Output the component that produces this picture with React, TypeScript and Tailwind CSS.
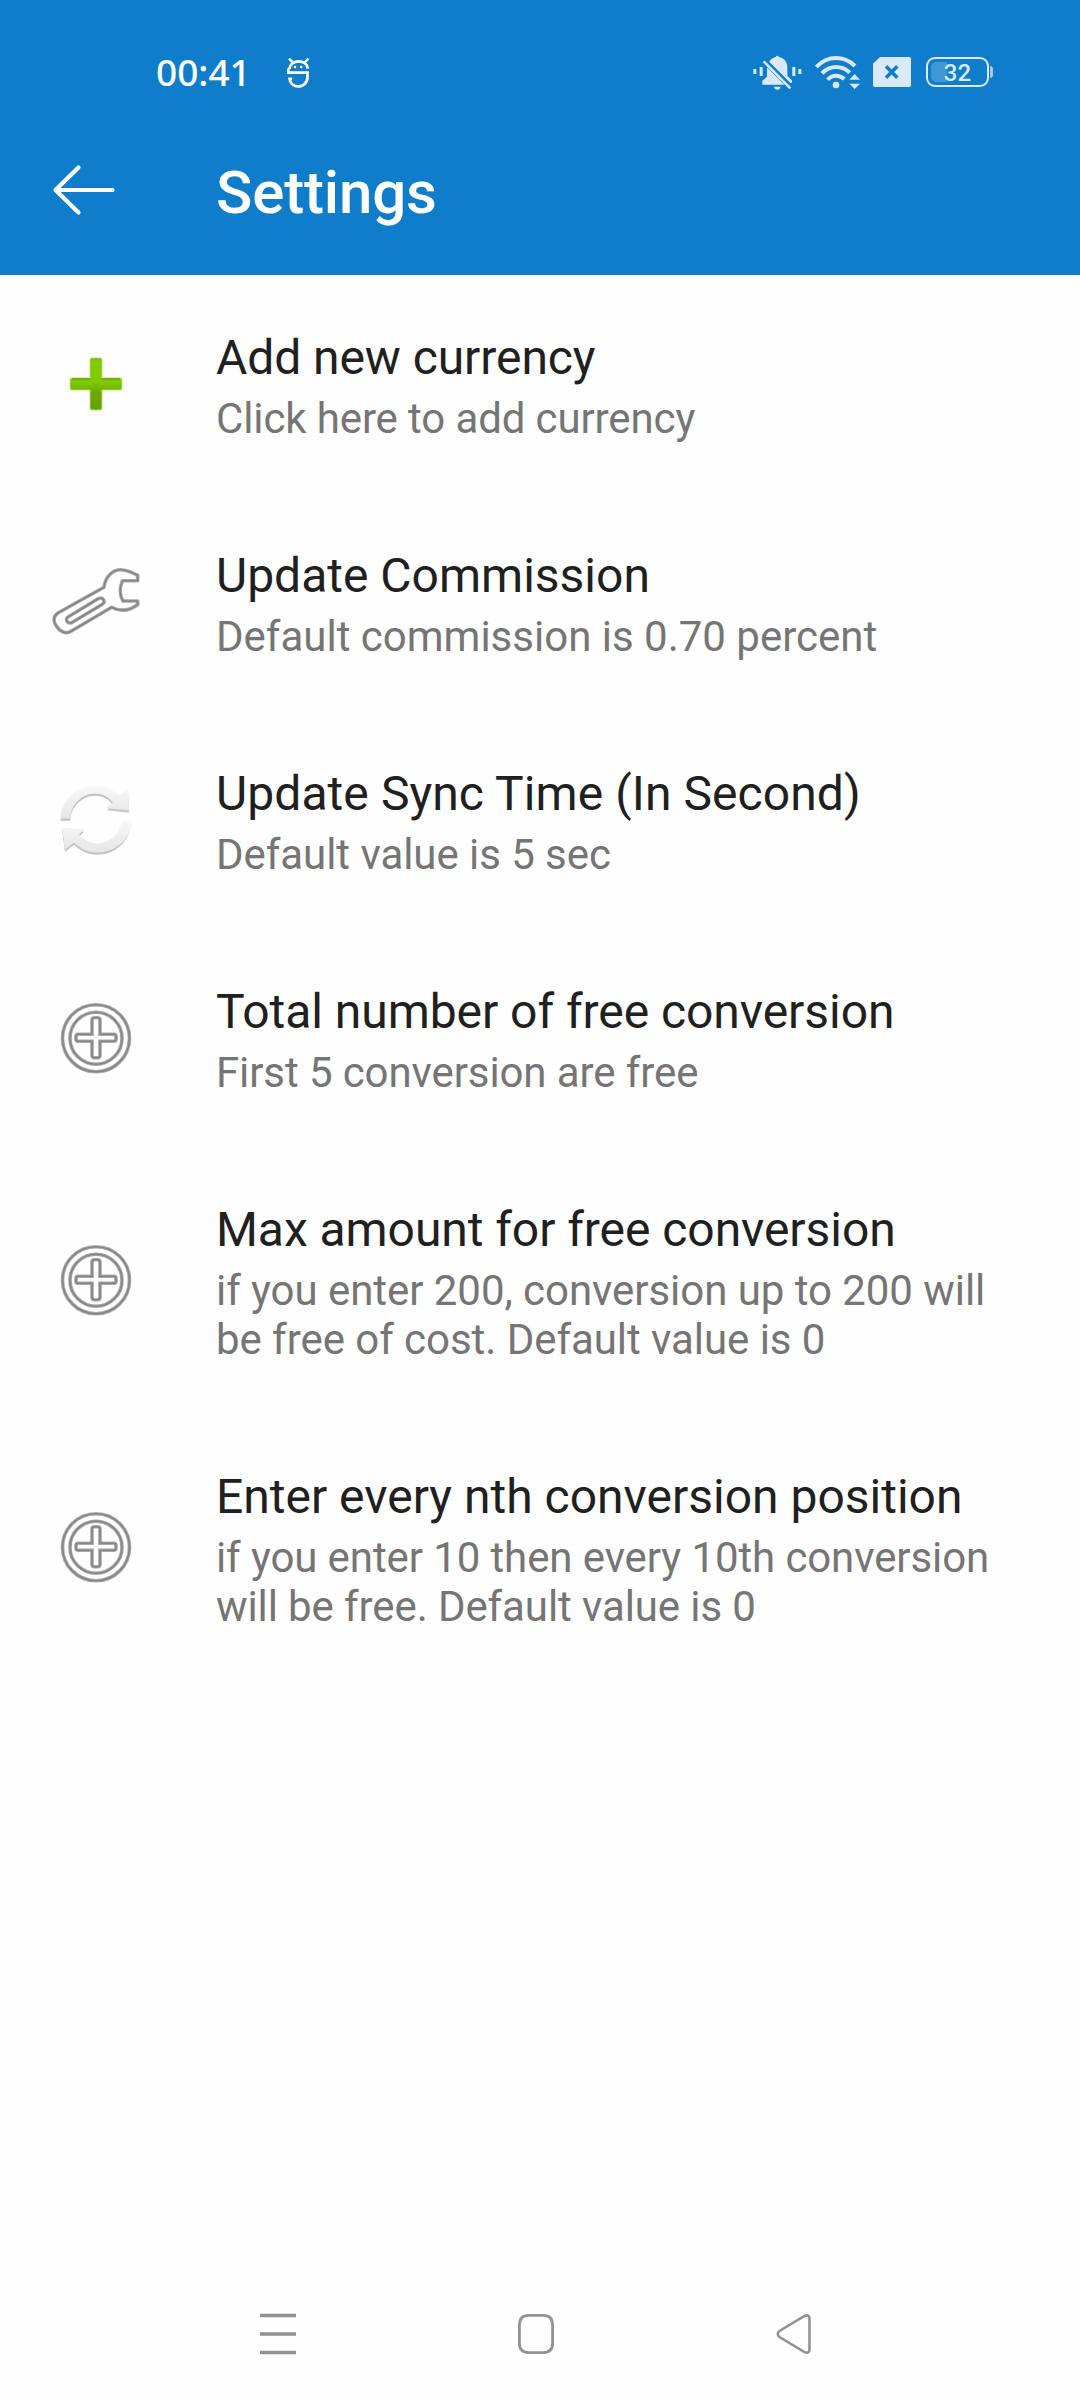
import type { ReactNode } from 'react';

function ThreadFaceIcon() {
  return (
    <svg className="w-[24px] h-[34px]" viewBox="0 0 24 34" fill="none" stroke="white" strokeWidth="2.7">
      <path d="M20.6 11.7 C20.6 7 16.5 4.300 11.600 4.300 C6.600 4.300 2.600 7.500 2.600 12" />
      <path d="M1.300 11.500 V15.600 H20.500 V19.500 C20.500 25.500 16.500 29.400 11.500 29.400 C6.500 29.400 2.600 26 2.600 21.800 H5.200" />
      <path d="M2 1.700 L5.800 5.300 M21.500 1.700 L17.700 5.300" strokeWidth="2.4" />
      <circle cx="8" cy="10" r="1.300" fill="white" stroke="none" />
      <circle cx="14.200" cy="10" r="1.300" fill="white" stroke="none" />
    </svg>
  );
}

function MutedBellIcon() {
  return (
    <svg className="w-[50px] h-[36px]" viewBox="0 0 150 108" fill="#dbe9f7">
      <rect x="4" y="45" width="9" height="15" />
      <rect x="23" y="39" width="9" height="27" />
      <rect x="121" y="39" width="9" height="27" />
      <rect x="139" y="45" width="9" height="15" />
      <path d="M50 26 C55 16 63 11 71 9 Q76 1 81 9 C96 12 106 24 106 39 V65 L120 79 V86 L113 88 Z" />
      <path d="M47 42 L97 92 H31 V80 L45 68 V42 Z" />
      <path d="M66 98 H86 Q84 107 76 107 Q68 107 66 98 Z" />
      <path d="M42 18 L120 96" stroke="#0f7dc9" strokeWidth="6" />
      <path d="M35 22 L115 103" stroke="#dbe9f7" strokeWidth="8" />
    </svg>
  );
}

function WifiIcon() {
  return (
    <svg className="w-[47px] h-[36px]" viewBox="0 0 141 108" fill="none" stroke="#dbe9f7" strokeWidth="12">
      <path d="M7 39 Q32 12 66 12 Q99 12 123 36" />
      <path d="M24 58 Q42 39 66 39 Q90 39 107 56" />
      <path d="M41 77 Q51 65 66 65 Q80 65 91 75" />
      <circle cx="66" cy="93" r="10" fill="#dbe9f7" stroke="none" />
      <path d="M106 77 L122 60 L138 77 Z M106 89 H138 L122 105 Z" fill="#dbe9f7" stroke="none" />
    </svg>
  );
}

function SimIcon() {
  return (
    <svg className="w-[38px] h-[30px]" viewBox="0 0 114 90">
      <path d="M21 0 H108 Q114 0 114 6 V84 Q114 90 108 90 H6 Q0 90 0 84 V20 Z" fill="#dbe9f7" />
      <path d="M39 28 L73 62 M73 28 L39 62" stroke="#0f7dc9" strokeWidth="10.5" />
    </svg>
  );
}

function Battery() {
  return (
    <div className="flex items-center">
      <div className="relative flex h-[30px] w-[63px] items-center justify-center rounded-[9px] border-2 border-[#dbe9f7]">
        <div className="absolute left-[3px] top-[3px] h-5 w-[16px] rounded-l-[5px] bg-[#3f97d4]" />
        <span className="relative pt-px text-[24px] font-medium leading-none text-[#dbe9f7]">32</span>
      </div>
      <div className="ml-px h-[12px] w-[3px] rounded-r-full bg-[#9fcae9]" />
    </div>
  );
}

function BackArrow() {
  return (
    <svg className="w-[64px] h-[52px]" viewBox="0 0 64 52" fill="none" stroke="white" strokeWidth="4.2" strokeLinecap="round" strokeLinejoin="round">
      <path d="M26.500 3.5 L3.500 26 L26.500 48.5 M4 26 H60.5" />
    </svg>
  );
}

function GreenPlus() {
  return (
    <svg className="w-[96px] h-[96px]" viewBox="0 0 96 96">
      <defs>
        <linearGradient id="green" x1="0" y1="0" x2="0" y2="1">
          <stop offset="0" stopColor="#6fb300" />
          <stop offset=".06" stopColor="#82cc00" />
          <stop offset=".45" stopColor="#80cb00" />
          <stop offset=".68" stopColor="#6aa900" />
          <stop offset="1" stopColor="#64a000" />
        </linearGradient>
      </defs>
      <path d="M44 22 H52 Q54 22 54 24 V42 H72 Q74 42 74 44 V52 Q74 54 72 54 H54 V72 Q54 74 52 74 H44 Q42 74 42 72 V54 H24 Q22 54 22 52 V44 Q22 42 24 42 H42 V24 Q42 22 44 22 Z" fill="url(#green)" stroke="#b9e16d" strokeWidth=".8" />
      <path d="M24 43 H42 M54 43 H72" stroke="#66a800" strokeWidth="1.4" />
    </svg>
  );
}

const WRENCH =
  'M56 33.300 C57 23 65 14.500 75 16 C80 16.500 85 19 89.700 21.300 V26.700 H74.500 C71.500 33 71.500 41 75 47 H89.700 V50.500 C81 57.500 71 57.500 63.700 53.300 L23 77.300 C17 81 11 76.500 8 71.500 C5 67 5 62 10.300 58.700 Z';
const WRENCH_SLOT = 'M20 63 L50.500 44.500 C55.500 42.500 58 48 54 50.500 L24 68.500 C19.500 70.500 16.500 65 20 63 Z';

function WrenchIcon() {
  return (
    <svg className="w-[96px] h-[96px]" viewBox="0 0 96 96" fill="none" strokeLinejoin="round">
      <g stroke="#a9a9a9" strokeWidth="3.6">
        <path d={WRENCH} />
        <path d={WRENCH_SLOT} />
      </g>
      <g stroke="#858585" strokeWidth="1.6">
        <path d={WRENCH} />
        <path d={WRENCH_SLOT} />
      </g>
    </svg>
  );
}

function SyncIcon() {
  return (
    <svg className="w-[96px] h-[96px]" viewBox="0 0 96 96">
      <defs>
        <linearGradient id="silver" x1="0" y1="0" x2="0" y2="1">
          <stop offset="0" stopColor="#f8f8f8" />
          <stop offset="1" stopColor="#e6e6e6" />
        </linearGradient>
      </defs>
      <g fill="#c4c4c4" transform="translate(0 2.8)">
        <path d="M12.500 46 C14 27 29 12.500 47 12.500 C57 12.500 65 16 71 22 L80 16 L81 38 L59 35.500 L65 30 C60 24 54 21 47 21 C34 21 23 32 22 46 Z" />
        <path d="M83 48 C82 67 67 80 49 80 C40 80 32 76 26 70 L17 77 L14 55 L36 57 L31 62 C37 68 43 71 49 71 C62 71 72 61 74 48 Z" />
      </g>
      <g fill="url(#silver)" transform="translate(0 1.4)">
        <path d="M12 45 C14 27 29 12 47 12 C57 12 65 16 71 22 L80 16 L81 37 L58 34.500 L65 29 C60 23 54 20 47 20 C34 20 23 31 22 45 Z" />
        <path d="M84 47 C83 66 67 79 49 79 C40 79 32 75 26 69 L17 76 L14 54 L36 56 L31 61 C37 67 43 70 49 70 C62 70 72 60 74 47 Z" />
      </g>
    </svg>
  );
}

const PLUS =
  'M46.500 27.800 H49.500 Q52 27.800 52 30.300 V44.300 H66 Q68 44.300 68 46.800 V48.800 Q68 51.300 66 51.300 H52 V65.300 Q52 67.800 49.500 67.800 H46.500 Q44 67.800 44 65.300 V51.300 H30 Q28 51.300 28 48.800 V46.800 Q28 44.300 30 44.300 H44 V30.300 Q44 27.800 46.500 27.800 Z';

function CirclePlusIcon() {
  return (
    <svg className="w-[96px] h-[96px]" viewBox="0 0 96 96" fill="none">
      <g stroke="#a9a9a9" strokeWidth="3.6">
        <circle cx="48" cy="48.200" r="33.500" />
        <circle cx="48" cy="48.200" r="26" />
        <path d={PLUS} />
      </g>
      <g stroke="#858585" strokeWidth="1.6">
        <circle cx="48" cy="48.200" r="33.500" />
        <circle cx="48" cy="48.200" r="26" />
        <path d={PLUS} />
      </g>
    </svg>
  );
}

type Item = { title: string; summary: ReactNode; icon: ReactNode; titleTracking: string; summaryTracking: string };

const items: Item[] = [
  {
    title: 'Add new currency',
    summary: 'Click here to add currency',
    icon: <GreenPlus />,
    titleTracking: 'tracking-[-0.08px]',
    summaryTracking: 'tracking-[-0.12px]',
  },
  {
    title: 'Update Commission',
    summary: 'Default commission is 0.70 percent',
    icon: <WrenchIcon />,
    titleTracking: 'tracking-normal',
    summaryTracking: 'tracking-normal',
  },
  {
    title: 'Update Sync Time (In Second)',
    summary: 'Default value is 5 sec',
    icon: <SyncIcon />,
    titleTracking: 'tracking-[0.08px]',
    summaryTracking: 'tracking-[-0.05px]',
  },
  {
    title: 'Total number of free conversion',
    summary: 'First 5 conversion are free',
    icon: <CirclePlusIcon />,
    titleTracking: 'tracking-[-0.05px]',
    summaryTracking: 'tracking-[-0.1px]',
  },
  {
    title: 'Max amount for free conversion',
    summary: <>if you enter 200, conversion up to 200 will<br />be free of cost. Default value is 0</>,
    icon: <CirclePlusIcon />,
    titleTracking: 'tracking-[-0.06px]',
    summaryTracking: 'tracking-[-0.05px]',
  },
  {
    title: 'Enter every nth conversion position',
    summary: <>if you enter 10 then every 10th conversion<br />will be free. Default value is 0</>,
    icon: <CirclePlusIcon />,
    titleTracking: 'tracking-normal',
    summaryTracking: 'tracking-[-0.1px]',
  },
];

export default function App() {
  return (
    <div className="flex h-[2400px] w-[1080px] flex-col bg-[#fefefe] font-['Roboto',sans-serif]">
      <header className="flex h-[275px] flex-col bg-[#0f7dc9] text-white">
        <div className="flex h-[116px] items-start pl-[156px] pr-[87px] pt-[54px]">
          <span className="h-9 w-[131px] font-['Noto_Sans',sans-serif] text-[37px] font-medium leading-9">00:41</span>
          <div className="mt-[3px]"><ThreadFaceIcon /></div>
          <div className="ml-auto flex items-start">
            <MutedBellIcon />
            <div className="ml-[12px]"><WifiIcon /></div>
            <div className="ml-[12px] mt-[3px]"><SimIcon /></div>
            <div className="ml-[15px] mt-[3px]"><Battery /></div>
          </div>
        </div>
        <div className="flex h-[149px] items-center pl-[52px] pb-[1px]">
          <BackArrow />
          <h1 className="ml-[100px] pt-[6px] text-[60px] font-medium leading-[70px] tracking-[-0.15px]">Settings</h1>
        </div>
      </header>
      <main className="flex-1">
        {items.map((item) => (
          <div key={item.title} className="flex items-center pl-[48px] pb-[50px] pt-[55px]">
            <div className="-mt-[6px] w-[168px] shrink-0">{item.icon}</div>
            <div className="whitespace-nowrap">
              <div className={`mb-[8px] text-[48px] leading-[56px] text-[#202020] ${item.titleTracking}`}>{item.title}</div>
              <div className={`text-[42px] leading-[49px] text-[#757575] ${item.summaryTracking}`}>{item.summary}</div>
            </div>
          </div>
        ))}
      </main>
      <nav className="flex h-[132px] items-center pl-[260px]">
        <svg className="h-[44px] w-[36px]" viewBox="0 0 36 44" stroke="#929292" strokeWidth="3.4">
          <path d="M0 3.500 H36 M0 22 H36 M0 40.500 H36" />
        </svg>
        <svg className="ml-[222px] h-[44px] w-[36px]" viewBox="0 0 36 44" fill="none" stroke="#929292" strokeWidth="2.800">
          <path d="M11 3.400 H25 Q34.600 3.400 34.600 13 V31 Q34.600 40.600 25 40.600 H11 Q1.400 40.600 1.400 31 V13 Q1.400 3.400 11 3.400 Z" />
        </svg>
        <svg className="ml-[222px] h-[44px] w-[36px]" viewBox="0 0 36 44" fill="none" stroke="#929292" strokeWidth="2.600">
          <path d="M28.500 4 Q33.500 1.800 33.500 7 V37 Q33.500 42.200 28.500 40 L3.500 25 Q0 22 3.500 19 Z" />
        </svg>
      </nav>
    </div>
  );
}
